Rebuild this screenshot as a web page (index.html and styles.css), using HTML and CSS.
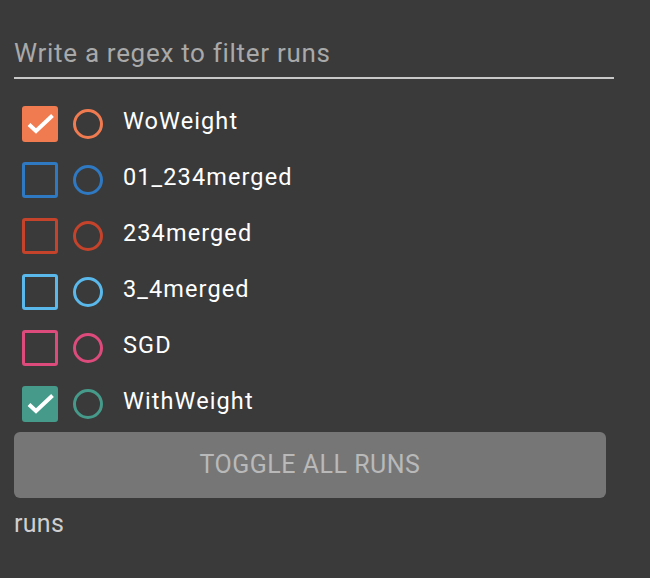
FILE: index.html
```html
<!DOCTYPE html>
<html>
<head>
<meta charset="utf-8">
<link rel="stylesheet" href="styles.css">
</head>
<body>
<div class="panel">
  <div class="filter">
    <input class="filter-input" type="text" placeholder="Write a regex to filter runs">
  </div>
  <div class="runs">
    <div class="run" style="--c:#f07b51">
      <span class="box checked"><svg viewBox="0 0 30 30"><path d="M4 15.5l7 6.5L27.5 6.5" /></svg></span>
      <span class="dot"></span>
      <span class="label">WoWeight</span>
    </div>
    <div class="run" style="--c:#2f78c2">
      <span class="box"></span>
      <span class="dot"></span>
      <span class="label">01_234merged</span>
    </div>
    <div class="run" style="--c:#c5432a">
      <span class="box"></span>
      <span class="dot"></span>
      <span class="label">234merged</span>
    </div>
    <div class="run" style="--c:#5ab8ea">
      <span class="box"></span>
      <span class="dot"></span>
      <span class="label">3_4merged</span>
    </div>
    <div class="run" style="--c:#dc4b7c">
      <span class="box"></span>
      <span class="dot"></span>
      <span class="label">SGD</span>
    </div>
    <div class="run" style="--c:#459a89">
      <span class="box checked"><svg viewBox="0 0 30 30"><path d="M4 15.5l7 6.5L27.5 6.5" /></svg></span>
      <span class="dot"></span>
      <span class="label">WithWeight</span>
    </div>
  </div>
  <button class="toggle">TOGGLE ALL RUNS</button>
  <div class="caption">runs</div>
</div>
</body>
</html>
```

FILE: styles.css
```css
html, body {
  margin: 0;
  padding: 0;
  background: #3a3a3a;
  height: 100%;
}
body {
  font-family: Roboto, "Liberation Sans", sans-serif;
  color: #ffffff;
}
.panel {
  width: 592px;
  padding: 0 0 0 14px;
}
.filter {
  padding-top: 30px;
  height: 47px;
  border-bottom: 2px solid #c8c8c8;
  width: 600px;
  box-sizing: content-box;
}
.filter-input {
  display: block;
  width: 100%;
  height: 46px;
  margin: 0;
  padding: 0;
  border: none;
  outline: none;
  background: transparent;
  font-family: Roboto, "Liberation Sans", sans-serif;
  font-size: 26px;
  letter-spacing: 0.7px;
  color: #fff;
}
.filter-input::placeholder {
  color: #a9a9a9;
  opacity: 1;
}
.runs {
  display: flex;
  flex-direction: column;
  padding-top: 17px;
}
.run {
  display: flex;
  align-items: center;
  height: 56px;
  padding-left: 8px;
}
.box {
  width: 36px;
  height: 36px;
  box-sizing: border-box;
  border: 3px solid var(--c);
  border-radius: 3px;
  display: flex;
  align-items: center;
  justify-content: center;
  flex: none;
}
.box.checked {
  background: var(--c);
}
.box svg {
  width: 30px;
  height: 30px;
  fill: none;
  stroke: #fff;
  stroke-width: 4;
}
.dot {
  width: 30px;
  height: 30px;
  box-sizing: border-box;
  border: 3px solid var(--c);
  border-radius: 50%;
  margin-left: 15px;
  flex: none;
}
.label {
  margin-left: 20px;
  font-size: 23.5px;
  letter-spacing: 1.1px;
  color: #fff;
  margin-top: -6px;
}
.toggle {
  display: block;
  width: 592px;
  height: 66px;
  margin: 0;
  border: none;
  border-radius: 6px;
  background: #767676;
  color: #b9b9b9;
  font-family: Roboto, "Liberation Sans", sans-serif;
  font-size: 25px;
  letter-spacing: 0.5px;
  padding: 0;
  padding-bottom: 2px;
}
.caption {
  margin-top: 11px;
  font-size: 25px;
  letter-spacing: 0.3px;
  color: #cfcfcf;
}
```
